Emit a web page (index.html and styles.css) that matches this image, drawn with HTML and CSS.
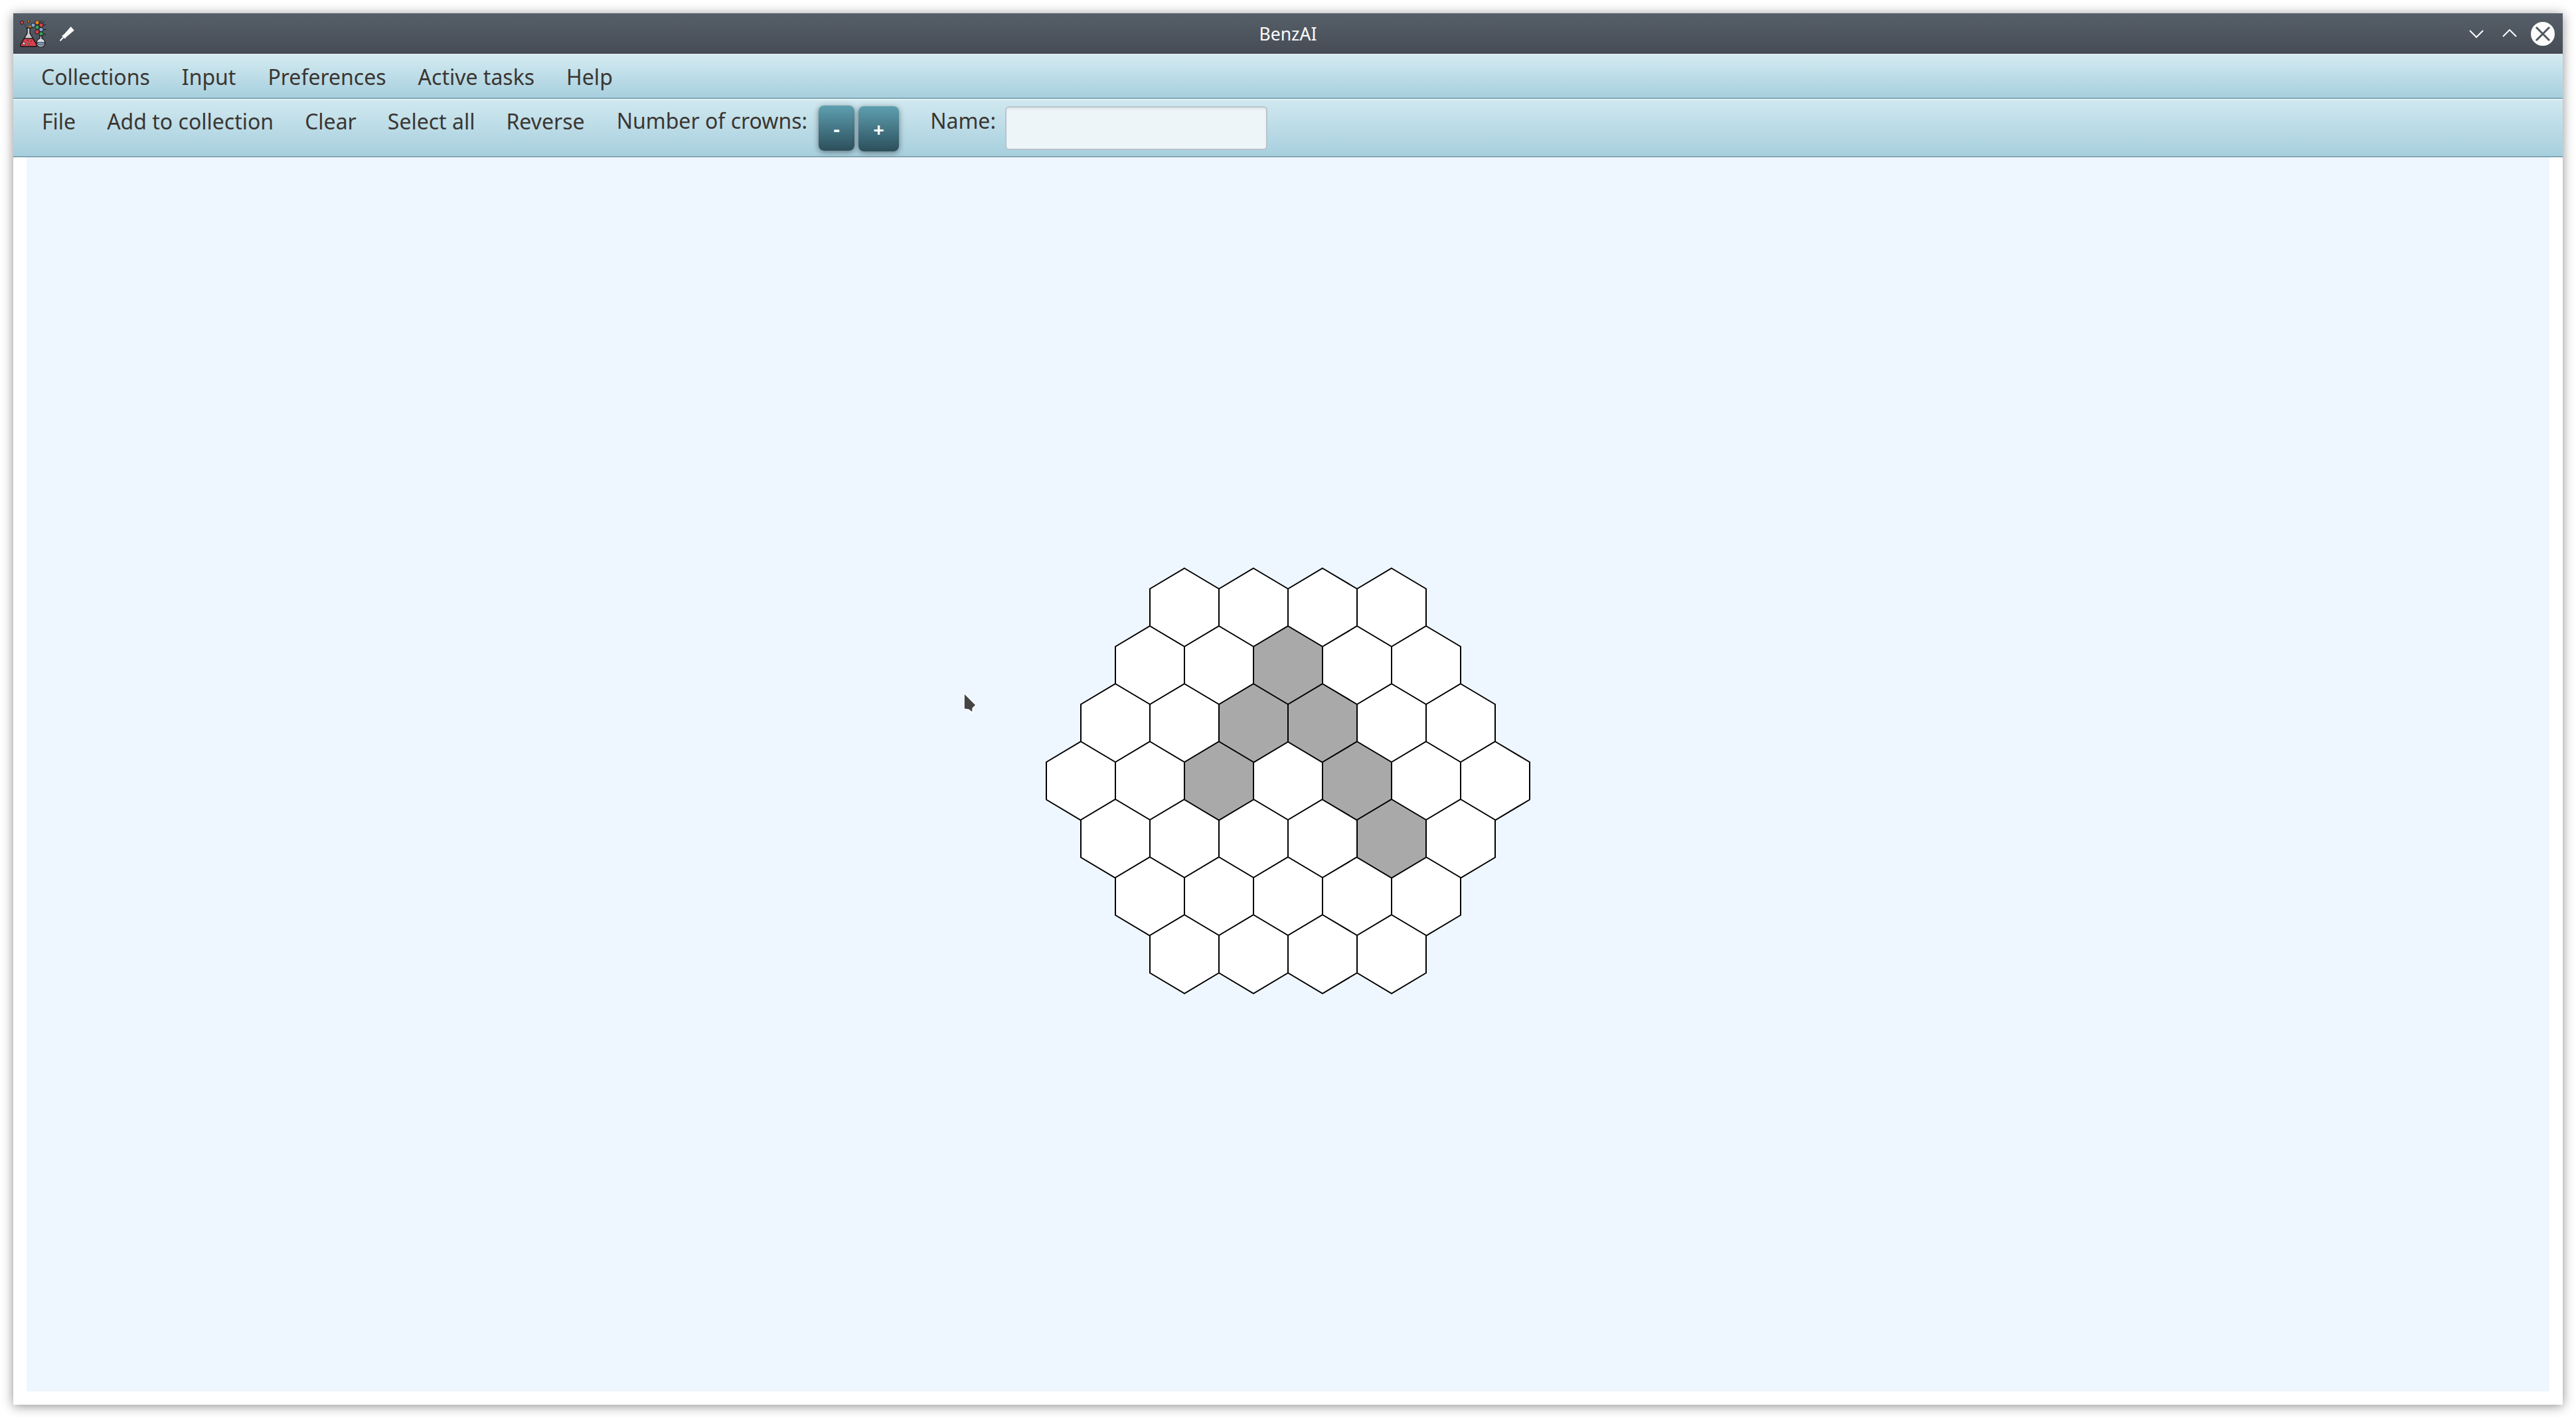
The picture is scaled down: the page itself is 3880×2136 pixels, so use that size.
FILE: index.html
```html
<!DOCTYPE html>
<html lang="en">
<head>
  <meta charset="UTF-8" />
  <title>BenzAI</title>
  <link rel="stylesheet" href="styles.css">
</head>
<body>
  <div class="window">

    <div class="titlebar">
      <div class="title-left">
        <!-- app icon: flasks and molecule -->
        <svg class="app-icon" width="40" height="40" viewBox="0 0 40 40">
          <circle cx="3" cy="3" r="2.6" fill="#d8404f" stroke="#1b1b1b" stroke-width="1"/>
          <circle cx="13" cy="1.5" r="1.8" fill="#f08a1d" stroke="#1b1b1b" stroke-width="1"/>
          <circle cx="8" cy="7" r="1.2" fill="#7fa6cf" stroke="#1b1b1b" stroke-width="0.8"/>
          <path d="M12 11 q2 -4 6 -2 l0 3 z" fill="#f08a1d"/>
          <circle cx="20" cy="7" r="3.2" fill="#7fa6cf" stroke="#1b1b1b" stroke-width="1"/>
          <circle cx="26" cy="3" r="3.2" fill="#f08a1d" stroke="#1b1b1b" stroke-width="1"/>
          <circle cx="32" cy="7" r="3.2" fill="#d8404f" stroke="#1b1b1b" stroke-width="1"/>
          <circle cx="26" cy="10" r="3.2" fill="#3da35a" stroke="#1b1b1b" stroke-width="1"/>
          <circle cx="32" cy="13.500" r="3.2" fill="#7fa6cf" stroke="#1b1b1b" stroke-width="1"/>
          <circle cx="26" cy="17" r="3.2" fill="#d8404f" stroke="#1b1b1b" stroke-width="1"/>
          <circle cx="32" cy="20" r="3.2" fill="#3da35a" stroke="#1b1b1b" stroke-width="1"/>
          <path d="M30 2 l4 -2 M35 7 l4 -1 M35 13.500 l5 0 M35 20 l4 1 M34 4 l3 -3" stroke="#1b1b1b" stroke-width="1" fill="none"/>
          <path d="M9 11 h10 M11 11 v8 L1 36 q-1 3 2 3 h20 q3 0 2 -3 L15 19 v-8" fill="#c9c9c9" stroke="#1b1b1b" stroke-width="1.400"/>
          <path d="M6.500 27 h13 L25 36 q1 3 -2 3 H3 q-3 0 -2 -3 z" fill="#d8404f" stroke="#1b1b1b" stroke-width="1.400"/>
          <circle cx="6" cy="34.500" r="1.800" fill="#fff" stroke="#1b1b1b" stroke-width="0.8"/>
          <circle cx="13" cy="35" r="1.200" fill="#fff" stroke="#1b1b1b" stroke-width="0.8"/>
          <circle cx="12" cy="30" r="0.8" fill="#1b1b1b"/>
          <circle cx="17" cy="31" r="0.8" fill="#1b1b1b"/>
          <path d="M29 23 h6 M30 23 v4 q-5 2 -5 7 a6.500 6 0 0 0 13 0 q0 -5 -5 -7 v-4" fill="#d5dbe1" stroke="#1b1b1b" stroke-width="1.300"/>
          <path d="M25.500 33 h12 a6.300 5.800 0 0 1 -12 0 z" fill="#7fa6cf" stroke="#1b1b1b" stroke-width="1"/>
        </svg>
        <svg class="pin-icon" width="22" height="22" viewBox="0 0 22 22">
          <path d="M16.700 0 L21.700 5.700 L12 14 L10 15.500 L8 18.500 L3 14 L6 12 L8 10 Z" fill="#fcfcfc"/>
          <path d="M6.500 15 L0.500 21.500" stroke="#fcfcfc" stroke-width="2" fill="none"/>
        </svg>
      </div>
      <span class="title-text">BenzAI</span>
      <div class="title-right">
        <svg class="win-down" width="22" height="14" viewBox="0 0 22 14"><path d="M1 2 L11 12 L21 2" class="win-stroke"/></svg>
        <svg width="22" height="14" viewBox="0 0 22 14"><path d="M1 11 L11 1 L21 11" class="win-stroke"/></svg>
        <svg width="36" height="36" viewBox="0 0 36 36">
          <circle cx="18" cy="18" r="18" fill="#fcfcfc"/>
          <path d="M8 8 L28 28 M28 8 L8 28" class="close-stroke"/>
        </svg>
      </div>
    </div>

    <div class="menubar">
      <span class="menu-item">Collections</span>
      <span class="menu-item">Input</span>
      <span class="menu-item">Preferences</span>
      <span class="menu-item">Active tasks</span>
      <span class="menu-item">Help</span>
    </div>

    <div class="toolbar">
      <span class="tool-item">File</span>
      <span class="tool-item">Add to collection</span>
      <span class="tool-item">Clear</span>
      <span class="tool-item">Select all</span>
      <span class="tool-item">Reverse</span>
      <span class="crowns-label">Number of crowns:</span>
      <button class="crown-btn minus">-</button>
      <button class="crown-btn plus">+</button>
      <span class="name-label">Name:</span>
      <input class="name-input" type="text" />
    </div>

    <div class="content">
      <div class="canvas">
        <svg class="hex-grid" width="732" height="644" viewBox="0 0 732 644">
          <defs>
            <polygon id="hex" points="52,0 104,31 104,87.500 52,118.500 0,87.500 0,31"/>
          </defs>
          <g transform="translate(2 2)">
            <!-- row 1 -->
            <use href="#hex" class="cell" x="156" y="0"/>
            <use href="#hex" class="cell" x="260" y="0"/>
            <use href="#hex" class="cell" x="364" y="0"/>
            <use href="#hex" class="cell" x="468" y="0"/>
            <!-- row 2 -->
            <use href="#hex" class="cell" x="104" y="87"/>
            <use href="#hex" class="cell" x="208" y="87"/>
            <use href="#hex" class="cell" x="416" y="87"/>
            <use href="#hex" class="cell" x="520" y="87"/>
            <!-- row 3 -->
            <use href="#hex" class="cell" x="52" y="174"/>
            <use href="#hex" class="cell" x="156" y="174"/>
            <use href="#hex" class="cell" x="468" y="174"/>
            <use href="#hex" class="cell" x="572" y="174"/>
            <!-- row 4 -->
            <use href="#hex" class="cell" x="0" y="261"/>
            <use href="#hex" class="cell" x="104" y="261"/>
            <use href="#hex" class="cell" x="312" y="261"/>
            <use href="#hex" class="cell" x="520" y="261"/>
            <use href="#hex" class="cell" x="624" y="261"/>
            <!-- row 5 -->
            <use href="#hex" class="cell" x="52" y="348"/>
            <use href="#hex" class="cell" x="156" y="348"/>
            <use href="#hex" class="cell" x="260" y="348"/>
            <use href="#hex" class="cell" x="364" y="348"/>
            <use href="#hex" class="cell" x="572" y="348"/>
            <!-- row 6 -->
            <use href="#hex" class="cell" x="104" y="435"/>
            <use href="#hex" class="cell" x="208" y="435"/>
            <use href="#hex" class="cell" x="312" y="435"/>
            <use href="#hex" class="cell" x="416" y="435"/>
            <use href="#hex" class="cell" x="520" y="435"/>
            <!-- row 7 -->
            <use href="#hex" class="cell" x="156" y="522"/>
            <use href="#hex" class="cell" x="260" y="522"/>
            <use href="#hex" class="cell" x="364" y="522"/>
            <use href="#hex" class="cell" x="468" y="522"/>
            <!-- selected cells -->
            <use href="#hex" class="cell on" x="312" y="87"/>
            <use href="#hex" class="cell on" x="260" y="174"/>
            <use href="#hex" class="cell on" x="364" y="174"/>
            <use href="#hex" class="cell on" x="208" y="261"/>
            <use href="#hex" class="cell on" x="416" y="261"/>
            <use href="#hex" class="cell on" x="468" y="348"/>
          </g>
        </svg>
        <!-- mouse pointer -->
        <svg class="cursor" width="22" height="35" viewBox="0 0 22 35">
          <path d="M2 2 L2 26 L9 27 L13 30 L15 33 L15 25 L20 20 Z" fill="#444" stroke="#fff" stroke-width="1.500" stroke-linejoin="round"/>
        </svg>
      </div>
    </div>

  </div>
</body>
</html>
```

FILE: styles.css
```css
* {
  box-sizing: border-box;
}

html, body {
  margin: 0;
  height: 100%;
}

body {
  background: #fff;
  padding: 20px;
  font-family: "Noto Sans", "Open Sans", sans-serif;
  font-size: 32px;
  color: #3a3632;
}

.window {
  height: 2096px;
  display: flex;
  flex-direction: column;
  background: #fff;
  box-shadow: 0 2px 16px rgba(0, 0, 0, 0.45);
}

/* title bar */
.titlebar {
  height: 62px;
  flex: none;
  display: flex;
  align-items: center;
  justify-content: space-between;
  position: relative;
  padding: 0 12px 0 10px;
  background: linear-gradient(#565f69, #464c55);
  border-bottom: 1px solid #e8eef2;
}

.title-left {
  display: flex;
  align-items: center;
  gap: 20px;
}

.app-icon {
  display: block;
}

.pin-icon {
  display: block;
}

.title-text {
  position: absolute;
  left: 0;
  right: 0;
  text-align: center;
  color: #fcfcfc;
  font-size: 26.500px;
}

.title-right {
  display: flex;
  align-items: center;
  gap: 21px;
}

.win-down {
  margin-right: 7px;
}

.win-stroke {
  fill: none;
  stroke: #fcfcfc;
  stroke-width: 2;
}

.close-stroke {
  fill: none;
  stroke: #4f5761;
  stroke-width: 3;
}

/* menu + toolbar */
.menubar {
  height: 67px;
  flex: none;
  display: flex;
  align-items: center;
  gap: 48px;
  padding: 1px 42px 0;
  background: linear-gradient(#d4ebf1, #a7cfde);
  border-bottom: 2px solid #82a7b3;
}

.toolbar {
  height: 88px;
  flex: none;
  display: flex;
  align-items: flex-start;
  padding: 3px 0 0 43px;
  background: linear-gradient(#d0e8ef, #a7cfde);
  border-top: 2px solid #e6f2f6;
  border-bottom: 2px solid #82a7b3;
}

.tool-item,
.crowns-label,
.name-label {
  line-height: 44px;
  margin-top: 7px;
  white-space: nowrap;
}

.tool-item {
  margin-right: 47px;
}

.crowns-label {
  margin: 6px 17px 0 1px;
}

.crown-btn {
  height: 68px;
  border: none;
  border-radius: 8px;
  background: linear-gradient(#5e9fb0, #2c4f5b);
  box-shadow: 0 2px 8px rgba(0, 0, 0, 0.45);
  color: #fff;
  font-family: inherit;
  font-size: 29px;
  font-weight: 700;
  padding: 0;
}

.minus {
  width: 54px;
  margin: 5px 6px 0 0;
}

.plus {
  width: 61px;
  margin: 6px 47px 0 0;
}

.name-label {
  margin-top: 6px;
  margin-right: 14px;
}

.name-input {
  margin-top: 6px;
  width: 395px;
  height: 66px;
  border: 2px solid #b8c4cc;
  border-radius: 6px;
  background: #edf5f8;
  box-shadow: inset 0 3px 3px rgba(0, 0, 0, 0.05);
}

/* main area */
.content {
  flex: 1;
  padding: 0 20px 20px;
  display: flex;
}

.canvas {
  flex: 1;
  position: relative;
  background: #eef6ff;
  display: flex;
  justify-content: center;
  padding-top: 617px;
}

.hex-grid {
  display: block;
}

.cell {
  fill: #fff;
  stroke: #000;
  stroke-width: 2;
}

.cell.on {
  fill: #a9a9a9;
}

.cursor {
  position: absolute;
  left: 1410px;
  top: 805px;
}
```
